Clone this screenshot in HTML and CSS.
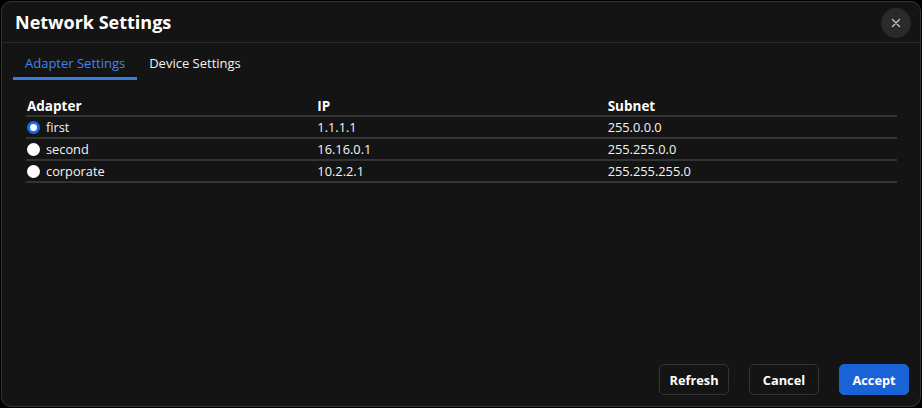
FILE: index.html
```html
<!DOCTYPE html>
<html>
<head>
<meta charset="utf-8">
<link rel="stylesheet" href="styles.css">
</head>
<body>
<div class="dialog">
  <div class="header">
    <h1 class="title">Network Settings</h1>
    <button class="close" aria-label="Close">
      <svg width="10" height="10" viewBox="0 0 10 10"><path d="M1.5 1.5 L8.5 8.5 M8.5 1.5 L1.5 8.5" stroke="#cfcfcf" stroke-width="1.2" stroke-linecap="round"/></svg>
    </button>
  </div>
  <div class="tabs">
    <div class="tab active">Adapter Settings</div>
    <div class="tab">Device Settings</div>
  </div>
  <div class="content">
    <table class="grid">
      <thead>
        <tr><th>Adapter</th><th>IP</th><th>Subnet</th></tr>
      </thead>
      <tbody>
        <tr><td><label class="opt"><span class="radio checked"></span>first</label></td><td>1.1.1.1</td><td>255.0.0.0</td></tr>
        <tr><td><label class="opt"><span class="radio"></span>second</label></td><td>16.16.0.1</td><td>255.255.0.0</td></tr>
        <tr><td><label class="opt"><span class="radio"></span>corporate</label></td><td>10.2.2.1</td><td>255.255.255.0</td></tr>
      </tbody>
    </table>
  </div>
  <div class="footer">
    <button class="btn">Refresh</button>
    <button class="btn">Cancel</button>
    <button class="btn primary">Accept</button>
  </div>
</div>
</body>
</html>
```
FILE: styles.css
```css
html, body {
  margin: 0;
  padding: 0;
  background: #000;
  width: 922px;
  height: 408px;
  overflow: hidden;
}
body {
  font-family: "Open Sans", "Noto Sans", sans-serif;
  color: #fff;
  padding: 1px;
  box-sizing: border-box;
}
.dialog {
  box-sizing: border-box;
  width: 920px;
  height: 406px;
  background: #141414;
  border: 1px solid #363636;
  border-radius: 10px;
  display: flex;
  flex-direction: column;
}
.header {
  height: 41px;
  box-sizing: border-box;
  border-bottom: 1px solid #2a2a2a;
  display: flex;
  align-items: center;
  justify-content: space-between;
  padding: 0 9px 0 13px;
}
.title {
  margin: 0;
  font-size: 18px;
  font-weight: 700;
  letter-spacing: 0;
}
.close {
  width: 30px;
  height: 30px;
  border-radius: 50%;
  border: none;
  background: #2a2a2a;
  display: flex;
  align-items: center;
  justify-content: center;
  padding: 0;
  margin-top: 2px;
}
.tabs {
  display: flex;
  padding: 0 11px;
  height: 38px;
  box-sizing: border-box;
}
.tab {
  font-size: 13px;
  padding: 11px 12px 0;
  height: 37px;
  box-sizing: border-box;
  color: #f2f2f2;
}
.tab.active {
  color: #3f86ee;
  border-bottom: 3px solid #3a7be0;
}
.content {
  flex: 1;
  padding: 15px 23px 0 24px;
}
.grid {
  width: 100%;
  border-collapse: collapse;
  table-layout: fixed;
  font-size: 12.8px;
}
.grid th {
  text-align: left;
  font-weight: 700;
  font-size: 13.5px;
  padding: 0 1px;
  height: 19px;
  border-bottom: 2px solid #333;
}
.grid td {
  padding: 0 1px;
  height: 20px;
  border-bottom: 2px solid #333;
  color: #f5f5f5;
}
.opt {
  display: flex;
  align-items: center;
  gap: 6px;
}
.radio {
  width: 13px;
  height: 13px;
  box-sizing: border-box;
  border-radius: 50%;
  background: #fff;
  display: inline-block;
}
.radio.checked {
  border: 3px solid #1a6ae6;
  background: #fff;
}
.footer {
  display: flex;
  justify-content: flex-end;
  gap: 20px;
  padding: 0 11px 11px 0;
}
.btn {
  font-family: "Open Sans", "Noto Sans", sans-serif;
  width: 70px;
  height: 31px;
  border-radius: 5px;
  background: #141414;
  border: 1px solid #343434;
  color: #fff;
  font-weight: 700;
  font-size: 12.8px;
  padding: 0;
}
.btn.primary {
  background: #1a63d6;
  border-color: #1a63d6;
}
```
